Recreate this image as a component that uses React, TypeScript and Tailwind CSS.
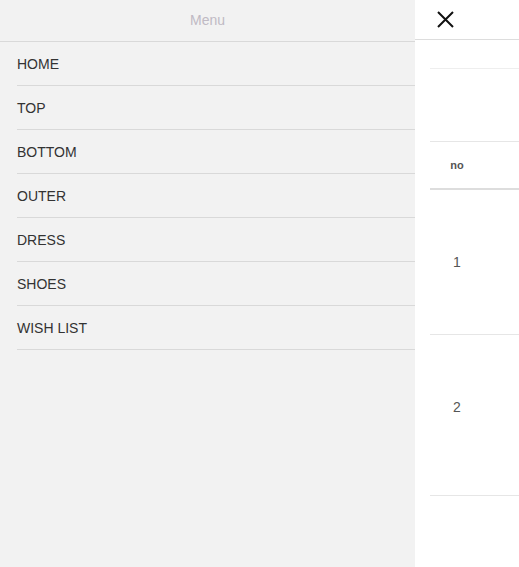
import React from "react";

const items = ["HOME", "TOP", "BOTTOM", "OUTER", "DRESS", "SHOES", "WISH LIST"];

export default function App() {
  return (
    <div
      className="flex w-[519px] h-[567px] overflow-hidden bg-white"
      style={{ fontFamily: '"Liberation Sans", Arial, sans-serif' }}
    >
      <div className="w-[415px] shrink-0 h-full bg-[#f2f2f2]">
        <div className="h-[42px] border-b border-[#d9d9d9] flex items-center justify-center text-[14px] text-[#c0bac4]">
          Menu
        </div>
        <ul className="pl-[17px]">
          {items.map((it) => (
            <li
              key={it}
              className="h-[44px] border-b border-[#d9d9d9] flex items-center pt-[2px] text-[14px] text-[#333333]"
            >
              {it}
            </li>
          ))}
        </ul>
      </div>
      <div className="flex-1 h-full bg-white">
        <div className="h-[40px] border-b border-[#dddddd] flex items-center pl-[22px]">
          <svg width="17" height="17" viewBox="0 0 17 17">
            <path d="M1 1 L16 16 M16 1 L1 16" stroke="#111" strokeWidth="2" fill="none" />
          </svg>
        </div>
        <div className="ml-[15px]">
          <div className="h-[29px] border-b border-[#eeeeee]" />
          <div className="h-[73px] border-b border-[#e6e6e6]" />
          <div className="h-[48px] border-b-2 border-[#dddddd] flex items-center">
            <div className="w-[54px] text-center text-[11px] font-bold text-[#555555]">no</div>
          </div>
          <div className="h-[145px] border-b border-[#e6e6e6] flex items-center">
            <div className="w-[54px] text-center text-[14px] text-[#555555]">1</div>
          </div>
          <div className="h-[161px] border-b border-[#e6e6e6] pt-[64px]">
            <div className="w-[54px] text-center text-[14px] leading-[16px] text-[#555555]">2</div>
          </div>
        </div>
      </div>
    </div>
  );
}
